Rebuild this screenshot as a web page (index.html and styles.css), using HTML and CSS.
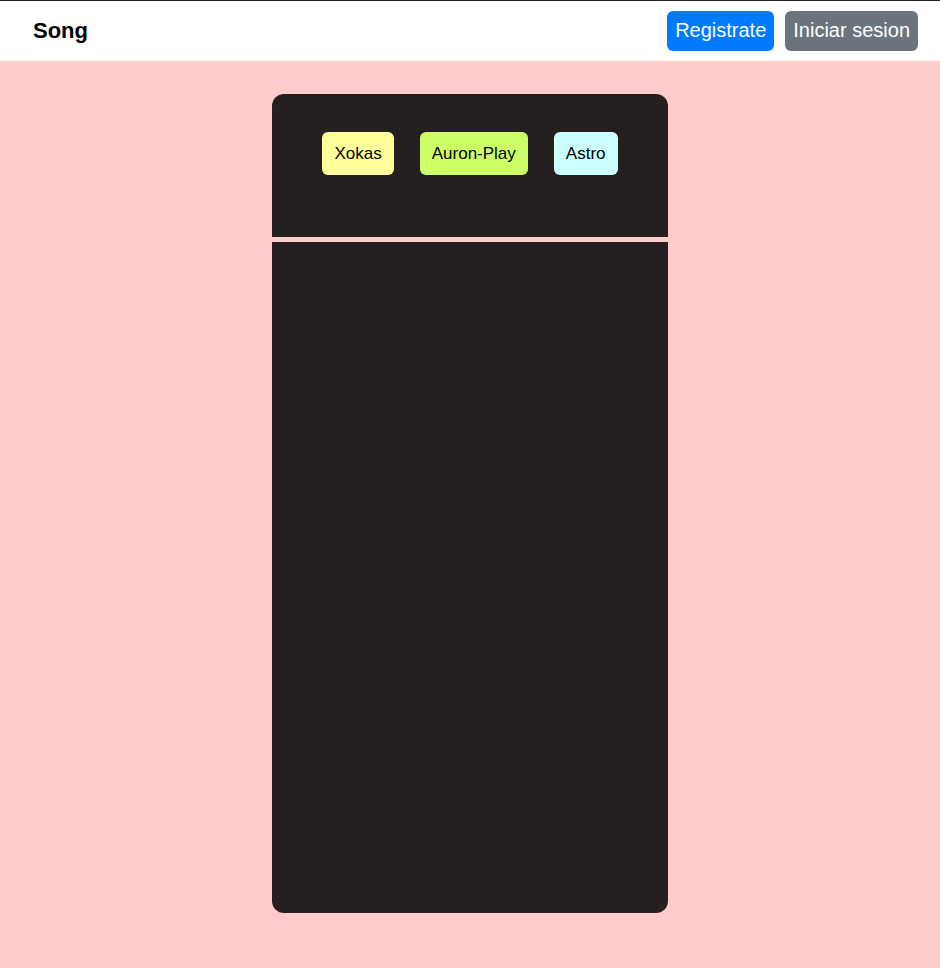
FILE: index.html
```html
<!DOCTYPE html>
<html>
<head>
    <title>Song</title>
    <link rel="stylesheet" href="styles.css">
</head>
<body>
    <header class="top-bar">
        <h1 class="brand">Song</h1>
        <div class="auth">
            <button class="btn btn-blue" type="button">Registrate</button>
            <button class="btn btn-gray" type="button">Iniciar sesion</button>
        </div>
    </header>

    <main class="page">
        <div class="player">
            <div class="artists">
                <button class="tag tag-yellow" type="button">Xokas</button>
                <button class="tag tag-green" type="button">Auron-Play</button>
                <button class="tag tag-cyan" type="button">Astro</button>
            </div>
            <div class="songs"></div>
        </div>
    </main>
</body>
</html>
```

FILE: styles.css
```css
body {
    margin: 0;
    background: #ffcccb;
    font-family: 'Liberation Sans', Arial, sans-serif;
}

.top-bar {
    display: flex;
    align-items: center;
    justify-content: space-between;
    height: 60px;
    padding: 0 22px 0 33px;
    background: #ffffff;
    border-top: 1px solid #222222;
}

.brand {
    margin: 0;
    font-size: 22px;
    font-weight: 700;
    color: #000000;
}

.auth {
    display: flex;
    gap: 11px;
    margin-top: -1px;
}

.btn {
    height: 40px;
    padding: 0 8px;
    border: none;
    border-radius: 6px;
    font-family: inherit;
    font-size: 20px;
    color: #ffffff;
}

.btn-blue { background: #007bff; }
.btn-gray { background: #6c757d; }

.page {
    display: flex;
    justify-content: center;
    padding-top: 33px;
}

.player {
    width: 396px;
}

.artists {
    display: flex;
    justify-content: center;
    gap: 26px;
    height: 143px;
    padding-top: 38px;
    box-sizing: border-box;
    background: #261f20;
    border-radius: 12px 12px 0 0;
}

.tag {
    height: 43px;
    padding: 0 12px;
    border: none;
    border-radius: 6px;
    font-family: inherit;
    font-size: 17px;
    color: #000000;
}

.tag-yellow { background: #ffff99; }
.tag-green { background: #ccff66; }
.tag-cyan { background: #ccffff; }

.songs {
    height: 671px;
    margin-top: 5px;
    background: #261f20;
    border-radius: 0 0 12px 12px;
}
```
